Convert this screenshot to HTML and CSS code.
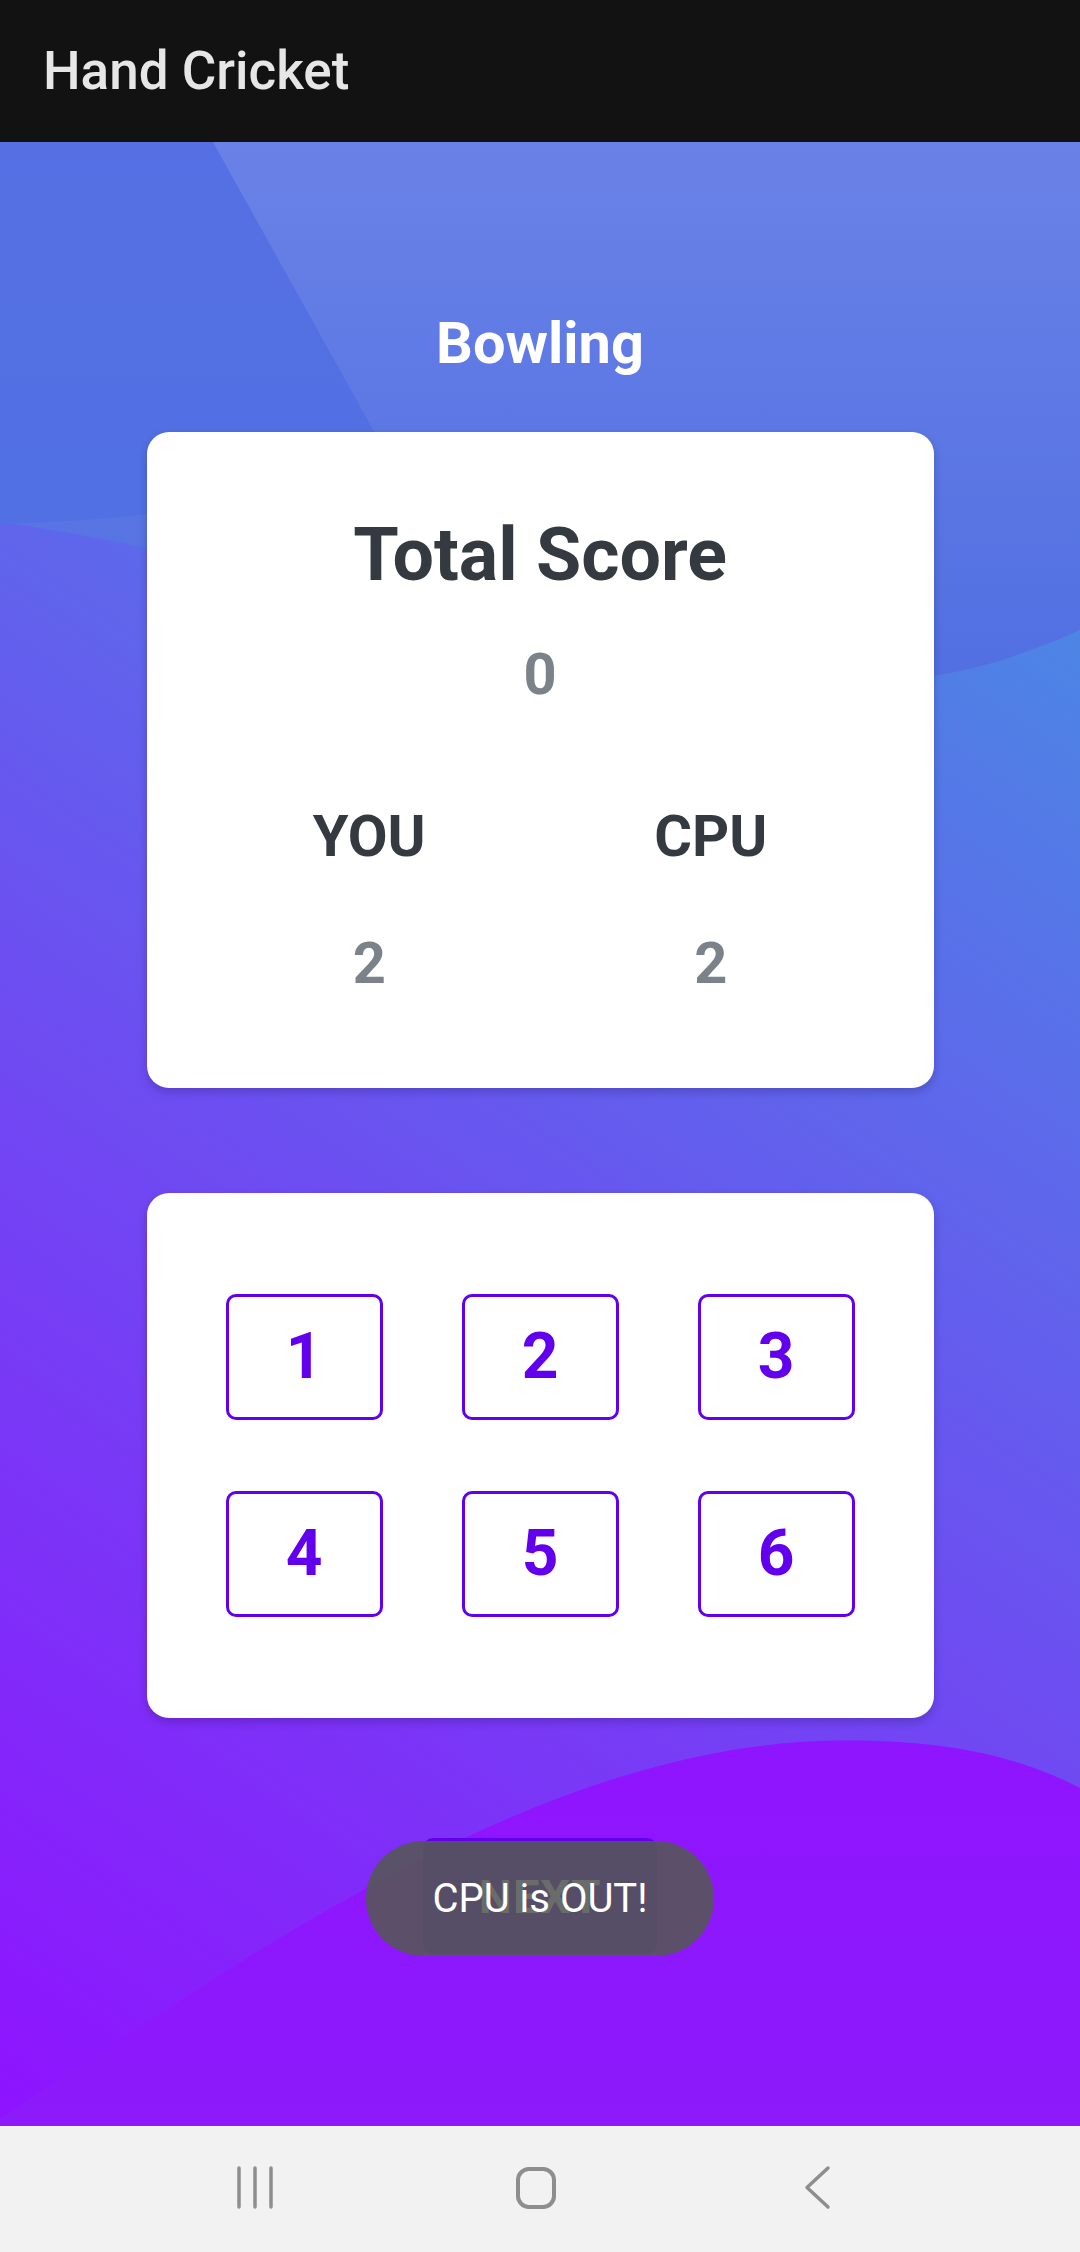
FILE: index.html
```html
<!DOCTYPE html>
<html lang="en">
<head>
<meta charset="utf-8">
<title>Hand Cricket</title>
<link rel="stylesheet" href="styles.css">
</head>
<body>
<div class="screen">
  <header class="appbar">
    <h1 class="appbar-title">Hand Cricket</h1>
  </header>

  <main class="stage">
    <svg class="stage-bg" viewBox="0 0 1080 1984" preserveAspectRatio="none" aria-hidden="true">
      <defs>
        <linearGradient id="baseGrad" gradientUnits="userSpaceOnUse" x1="1080" y1="400" x2="0" y2="1984">
          <stop offset="0" stop-color="#4a8ae3"/>
          <stop offset="1" stop-color="#8f12ff"/>
        </linearGradient>
        <linearGradient id="topGrad" gradientUnits="userSpaceOnUse" x1="0" y1="0" x2="0" y2="520">
          <stop offset="0" stop-color="#6a82e7"/>
          <stop offset="1" stop-color="#5270e2"/>
        </linearGradient>
        <linearGradient id="leftGrad" gradientUnits="userSpaceOnUse" x1="0" y1="0" x2="0" y2="380">
          <stop offset="0" stop-color="#5670e4"/>
          <stop offset="1" stop-color="#5170e3"/>
        </linearGradient>
        <linearGradient id="blobGrad" gradientUnits="userSpaceOnUse" x1="0" y1="1600" x2="0" y2="1984">
          <stop offset="0" stop-color="#8f14ff"/>
          <stop offset="1" stop-color="#8c1afa"/>
        </linearGradient>
      </defs>
      <rect x="0" y="0" width="1080" height="1984" fill="url(#baseGrad)"/>
      <path d="M0,0 H1080 V488 C1030,510 980,528 930,534 C650,565 300,420 0,380 Z" fill="url(#topGrad)"/>
      <path d="M0,0 H213 L380,300 C300,360 150,378 0,382 Z" fill="url(#leftGrad)"/>
      <path d="M0,1976 C200,1850 500,1620 800,1600 C950,1592 1030,1620 1080,1646 V1984 H0 Z" fill="url(#blobGrad)"/>
    </svg>

    <div class="stage-content">
      <h2 class="mode">Bowling</h2>

      <section class="card score-card">
        <h3 class="score-title">Total Score</h3>
        <div class="score-total">0</div>
        <div class="players">
          <div class="player-name">YOU</div>
          <div class="player-name">CPU</div>
          <div class="player-score">2</div>
          <div class="player-score">2</div>
        </div>
      </section>

      <section class="card pad-card">
        <div class="pad-grid">
          <button class="pad-btn">1</button>
          <button class="pad-btn">2</button>
          <button class="pad-btn">3</button>
          <button class="pad-btn">4</button>
          <button class="pad-btn">5</button>
          <button class="pad-btn">6</button>
        </div>
      </section>

      <div class="next-wrap">
        <button class="next-btn">NEXT</button>
        <div class="toast">CPU is OUT!</div>
      </div>
    </div>
  </main>

  <nav class="navbar">
    <svg class="nav-icon" viewBox="0 0 80 60" width="80" height="60" aria-label="Recent apps">
      <path d="M24 9 V48 M40 9 V48 M56 9 V48" stroke="#8e8e8e" stroke-width="3.5" stroke-linecap="round" fill="none"/>
    </svg>
    <svg class="nav-icon" viewBox="0 0 80 60" width="80" height="60" aria-label="Home">
      <rect x="22" y="10" width="36" height="38" rx="11" ry="11" stroke="#8e8e8e" stroke-width="4" fill="none"/>
    </svg>
    <svg class="nav-icon" viewBox="0 0 80 60" width="80" height="60" aria-label="Back">
      <path d="M51 9 L30 28.5 L51 48" stroke="#8e8e8e" stroke-width="3.5" stroke-linecap="round" stroke-linejoin="round" fill="none"/>
    </svg>
  </nav>
</div>
</body>
</html>
```

FILE: styles.css
```css
* {
  box-sizing: border-box;
}

html, body {
  margin: 0;
  padding: 0;
}

body {
  width: 1080px;
  height: 2252px;
  overflow: hidden;
  font-family: Roboto, "Noto Sans", "Liberation Sans", sans-serif;
  background: #121212;
}

.screen {
  width: 1080px;
  height: 2252px;
  display: flex;
  flex-direction: column;
}

/* App bar */
.appbar {
  height: 142px;
  flex: 0 0 142px;
  background: #121212;
  display: flex;
  align-items: center;
  padding-left: 43px;
}

.appbar-title {
  margin: 0;
  font-size: 53px;
  line-height: 62px;
  font-weight: 500;
  color: #e6e6e6;
}

/* Main stage */
.stage {
  position: relative;
  flex: 1 1 auto;
  overflow: hidden;
}

.stage-bg {
  position: absolute;
  left: 0;
  top: 0;
  width: 100%;
  height: 100%;
  display: block;
}

.stage-content {
  position: relative;
  display: flex;
  flex-direction: column;
  align-items: center;
  padding-top: 167px;
}

.mode {
  margin: 0;
  font-size: 57.75px;
  line-height: 68px;
  font-weight: 700;
  color: #ffffff;
}

.card {
  width: 787px;
  background: #ffffff;
  border-radius: 22px;
  box-shadow: 0 4px 10px rgba(20, 0, 60, 0.22);
}

.score-card {
  margin-top: 55px;
  padding: 80px 52px 91px;
  text-align: center;
}

.score-title {
  margin: 0;
  font-size: 73.5px;
  line-height: 86px;
  font-weight: 700;
  color: #343a40;
}

.score-total {
  margin-top: 42px;
  font-size: 57.75px;
  line-height: 68px;
  font-weight: 700;
  color: #7b828a;
}

.players {
  margin-top: 94px;
  display: grid;
  grid-template-columns: 1fr 1fr;
  grid-template-rows: 68px 68px;
  row-gap: 59px;
}

.player-name {
  font-size: 57.75px;
  line-height: 68px;
  font-weight: 700;
  color: #343a40;
}

.player-score {
  font-size: 57.75px;
  line-height: 68px;
  font-weight: 700;
  color: #7b828a;
}

.pad-card {
  margin-top: 105px;
  padding: 101px 0;
}

.pad-grid {
  display: grid;
  grid-template-columns: repeat(3, 157px);
  grid-auto-rows: 126px;
  column-gap: 79px;
  row-gap: 71px;
  justify-content: center;
}

.pad-btn {
  margin: 0;
  padding: 0;
  width: 157px;
  height: 126px;
  background: #ffffff;
  border: 3px solid #6200ee;
  border-radius: 10px;
  font-family: Roboto, "Noto Sans", "Liberation Sans", sans-serif;
  font-size: 64px;
  line-height: 1;
  font-weight: 700;
  color: #6200ee;
  display: flex;
  align-items: center;
  justify-content: center;
}

.next-wrap {
  position: relative;
  margin-top: 120px;
  width: 348px;
  display: flex;
  justify-content: center;
}

.next-btn {
  margin: 0;
  width: 234px;
  height: 116px;
  border: none;
  border-radius: 10px;
  background: #6200ee;
  color: #ffffff;
  font-family: Roboto, "Noto Sans", "Liberation Sans", sans-serif;
  font-size: 47px;
  font-weight: 700;
  letter-spacing: 1px;
}

.toast {
  position: absolute;
  top: 3px;
  left: 0;
  width: 348px;
  height: 115px;
  border-radius: 58px;
  background: rgba(84, 88, 84, 0.88);
  color: #ffffff;
  font-size: 40px;
  font-weight: 400;
  display: flex;
  align-items: center;
  justify-content: center;
}

/* System navigation bar */
.navbar {
  height: 126px;
  flex: 0 0 126px;
  background: #f2f2f2;
  display: flex;
  align-items: center;
  padding-left: 215px;
  gap: 201px;
}

.nav-icon {
  display: block;
  flex: 0 0 80px;
}
```
